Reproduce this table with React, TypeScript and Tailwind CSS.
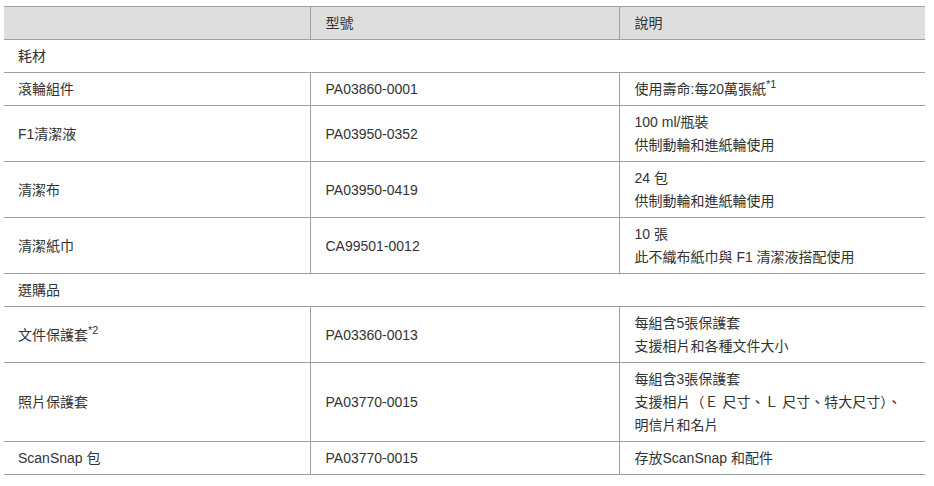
import React from 'react';

type Item = {
  name: React.ReactNode;
  model: string;
  desc: React.ReactNode[];
};

type Section = {
  title: string;
  items: Item[];
};

const Sup: React.FC<{ n: string }> = ({ n }) => (
  <sup className="text-[11px] top-[-6px]">*{n}</sup>
);

const sections: Section[] = [
  {
    title: '耗材',
    items: [
      { name: '滾輪組件', model: 'PA03860-0001', desc: [<>使用壽命:每20萬張紙<Sup n="1" /></>] },
      { name: 'F1清潔液', model: 'PA03950-0352', desc: ['100 ml/瓶裝', '供制動輪和進紙輪使用'] },
      { name: '清潔布', model: 'PA03950-0419', desc: ['24 包', '供制動輪和進紙輪使用'] },
      { name: '清潔紙巾', model: 'CA99501-0012', desc: ['10 張', '此不織布紙巾與 F1 清潔液搭配使用'] },
    ],
  },
  {
    title: '選購品',
    items: [
      { name: <>文件保護套<Sup n="2" /></>, model: 'PA03360-0013', desc: ['每組含5張保護套', '支援相片和各種文件大小'] },
      {
        name: '照片保護套',
        model: 'PA03770-0015',
        desc: ['每組含3張保護套', '支援相片（Ｅ 尺寸、Ｌ 尺寸、特大尺寸）、', '明信片和名片'],
      },
      { name: 'ScanSnap 包', model: 'PA03770-0015', desc: ['存放ScanSnap 和配件'] },
    ],
  },
];

const cell = 'pt-[5px] pb-[4px] leading-[23px] align-middle';

export default function App() {
  return (
    <div
      className="w-[934px] h-[486px] bg-white pt-[6px] pl-[4px] text-[14px] text-[#333333]"
      style={{ fontFamily: '"Liberation Sans", "Noto Sans CJK TC", sans-serif' }}
    >
      <table className="w-[921px] table-fixed border-collapse">
        <colgroup>
          <col className="w-[306px]" />
          <col className="w-[309px]" />
          <col />
        </colgroup>
        <thead>
          <tr className="bg-[#dedede] border-y border-[#a0a0a0]">
            <th className={`${cell} pl-[14px] font-normal text-left`}>&nbsp;</th>
            <th className={`${cell} pl-[15px] font-normal text-left border-l border-[#a0a0a0]`}>型號</th>
            <th className={`${cell} pl-[15px] font-normal text-left border-l border-[#a0a0a0]`}>說明</th>
          </tr>
        </thead>
        <tbody>
          {sections.map((s) => (
            <React.Fragment key={s.title}>
              <tr className="border-b border-[#a0a0a0]">
                <td colSpan={3} className={`${cell} pl-[14px]`}>
                  {s.title}
                </td>
              </tr>
              {s.items.map((it, i) => (
                <tr key={i} className="border-b border-[#a0a0a0]">
                  <td className={`${cell} pl-[14px]`}>{it.name}</td>
                  <td className={`${cell} pl-[15px] border-l border-[#a0a0a0]`}>{it.model}</td>
                  <td className={`${cell} pl-[15px] border-l border-[#a0a0a0]`}>
                    {it.desc.map((d, j) => (
                      <div key={j}>{d}</div>
                    ))}
                  </td>
                </tr>
              ))}
            </React.Fragment>
          ))}
        </tbody>
      </table>
    </div>
  );
}
